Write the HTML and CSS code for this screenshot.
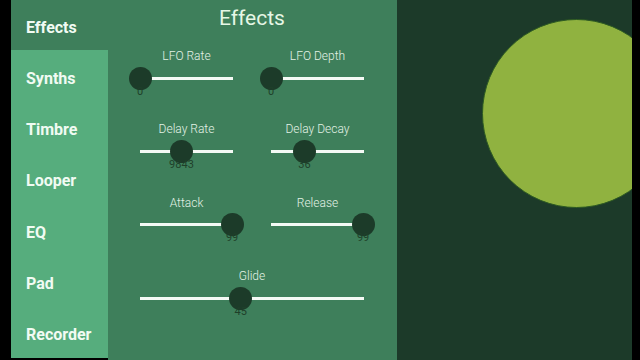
FILE: index.html
```html
<!DOCTYPE html>
<html lang="en">
<head>
    <meta charset="UTF-8">
    <title>Effects</title>
    <link rel="stylesheet" href="styles.css">
</head>
<body>
    <div class="app">
        <nav class="sidebar">
            <div class="tab active">Effects</div>
            <div class="tab-list">
                <div class="tab">Synths</div>
                <div class="tab">Timbre</div>
                <div class="tab">Looper</div>
                <div class="tab">EQ</div>
                <div class="tab">Pad</div>
                <div class="tab">Recorder</div>
            </div>
        </nav>

        <main class="panel">
            <h1>Effects</h1>
            <div class="sliders">
                <div class="slider">
                    <div class="slider-label">LFO Rate</div>
                    <div class="rail">
                        <div class="knob" style="left: 0%"><span>0</span></div>
                    </div>
                </div>
                <div class="slider">
                    <div class="slider-label">LFO Depth</div>
                    <div class="rail">
                        <div class="knob" style="left: 0%"><span>0</span></div>
                    </div>
                </div>
                <div class="slider">
                    <div class="slider-label">Delay Rate</div>
                    <div class="rail">
                        <div class="knob" style="left: 44.6%"><span>9843</span></div>
                    </div>
                </div>
                <div class="slider">
                    <div class="slider-label">Delay Decay</div>
                    <div class="rail">
                        <div class="knob" style="left: 36%"><span>36</span></div>
                    </div>
                </div>
                <div class="slider">
                    <div class="slider-label">Attack</div>
                    <div class="rail">
                        <div class="knob" style="left: 99%"><span>99</span></div>
                    </div>
                </div>
                <div class="slider">
                    <div class="slider-label">Release</div>
                    <div class="rail">
                        <div class="knob" style="left: 99%"><span>99</span></div>
                    </div>
                </div>
                <div class="slider wide">
                    <div class="slider-label">Glide</div>
                    <div class="rail">
                        <div class="knob" style="left: 45%"><span>45</span></div>
                    </div>
                </div>
            </div>
        </main>

        <section class="pad-area">
            <div class="pad-circle"></div>
        </section>
    </div>
</body>
</html>
```

FILE: styles.css
```css
body {
    margin: 0;
    background-color: #000;
    font-family: Roboto, "Liberation Sans", sans-serif;
}
.app {
    display: flex;
    width: 640px;
    height: 360px;
    padding-left: 11px;
    box-sizing: border-box;
    overflow: hidden;
}
.sidebar {
    width: 97px;
    display: flex;
    flex-direction: column;
}
.tab {
    height: 51.33px;
    display: flex;
    align-items: center;
    padding: 5px 0 0 15px;
    box-sizing: border-box;
    color: #f1fbf3;
    font-size: 16px;
    font-weight: bold;
}
.tab.active {
    height: 50px;
    background-color: #3e7f5b;
}
.tab-list {
    background-color: #56ad7d;
    height: 308px;
}
.panel {
    width: 289px;
    background-color: #3e7f5b;
    padding: 0 33px 0 32px;
    box-sizing: border-box;
}
.panel h1 {
    margin: 0;
    height: 36px;
    line-height: 36px;
    text-align: center;
    font-size: 21px;
    font-weight: normal;
    color: #e6f7e6;
}
.sliders {
    display: grid;
    grid-template-columns: 93px 93px;
    column-gap: 38px;
    grid-auto-rows: 73.4px;
    padding-top: 13px;
}
.slider.wide {
    grid-column: 1 / 3;
}
.slider-label {
    text-align: center;
    font-size: 12px;
    font-weight: 300;
    line-height: 15px;
    color: #e3f2e6;
}
.rail {
    position: relative;
    margin-top: 12.5px;
    height: 3px;
    background-color: #f4faf5;
}
.knob {
    position: absolute;
    top: -10px;
    width: 23px;
    height: 23px;
    margin-left: -11.5px;
    border-radius: 50%;
    background-color: #1c3b29;
}
.knob span {
    position: absolute;
    top: 18px;
    left: 50%;
    transform: translateX(-50%);
    font-size: 11px;
    color: #1f3f2a;
}
.pad-area {
    position: relative;
    width: 235px;
    background-color: #1c3a29;
    overflow: hidden;
}
.pad-circle {
    position: absolute;
    left: 85px;
    top: 19px;
    width: 187px;
    height: 187px;
    border-radius: 50%;
    background-color: #90b240;
    border: 1px solid #2d5a22;
}
```
